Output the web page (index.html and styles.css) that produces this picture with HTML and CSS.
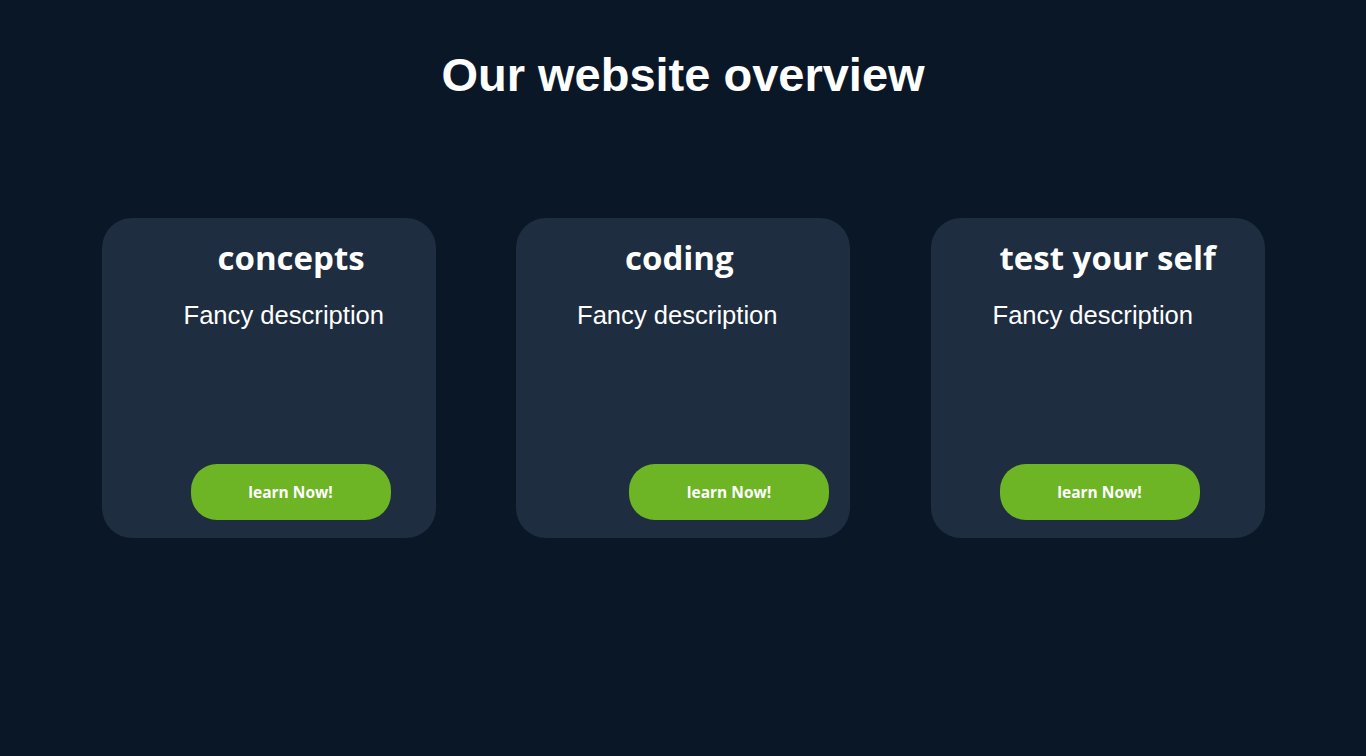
FILE: index.html
```html
<!DOCTYPE html>
<html lang="en">
<head>
<meta charset="utf-8">
<title>Our website overview</title>
<link rel="stylesheet" href="styles.css">
</head>
<body>
<main class="page">
  <h1 class="page-title">Our website overview</h1>
  <section class="cards">
    <article class="card card--concepts">
      <h2 class="card-title">concepts</h2>
      <p class="card-desc">Fancy description</p>
      <button class="card-btn" type="button">learn Now!</button>
    </article>
    <article class="card card--coding">
      <h2 class="card-title">coding</h2>
      <p class="card-desc">Fancy description</p>
      <button class="card-btn" type="button">learn Now!</button>
    </article>
    <article class="card card--test">
      <h2 class="card-title">test your self</h2>
      <p class="card-desc">Fancy description</p>
      <button class="card-btn" type="button">learn Now!</button>
    </article>
  </section>
</main>
</body>
</html>
```

FILE: styles.css
```css
* { box-sizing: border-box; }

html, body {
  margin: 0;
  padding: 0;
  background: #0a1727;
  height: 100%;
}

body {
  font-family: "Liberation Sans", Arial, sans-serif;
  color: #ffffff;
}

.page {
  display: flex;
  flex-direction: column;
  align-items: center;
  padding-top: 48px;
}

.page-title {
  margin: 0;
  font-family: "Liberation Sans", Arial, sans-serif;
  font-weight: 700;
  font-size: 47px;
  line-height: 54px;
  color: #ffffff;
}

.cards {
  display: flex;
  gap: 80.5px;
  margin-top: 116px;
}

.card {
  width: 334px;
  height: 320px;
  background: #1e2d3f;
  border-radius: 30px;
  padding: 18px 0;
  display: flex;
  flex-direction: column;
  align-items: flex-start;
}

.card-title {
  margin: 0 0 0 var(--title-x);
  font-family: "Open Sans", "Noto Sans", sans-serif;
  font-weight: 700;
  font-size: 33px;
  line-height: 44px;
  color: #ffffff;
}

.card-desc {
  margin: 21px 0 0 var(--desc-x);
  font-family: "Liberation Sans", Arial, sans-serif;
  font-size: 25.6px;
  line-height: 29px;
  color: #ffffff;
}

.card-btn {
  margin: auto 0 0 var(--btn-x);
  width: 200px;
  height: 56px;
  border: 0;
  border-radius: 26px;
  background: #6db524;
  color: #ffffff;
  font-family: "Open Sans", "Noto Sans", sans-serif;
  font-weight: 700;
  font-size: 15.5px;
  cursor: pointer;
}

.card--concepts { --title-x: 116px; --desc-x: 82px; --btn-x: 89px; }
.card--coding   { --title-x: 109px; --desc-x: 61px; --btn-x: 113px; }
.card--test     { --title-x: 69px;  --desc-x: 62px; --btn-x: 69px; }
```
